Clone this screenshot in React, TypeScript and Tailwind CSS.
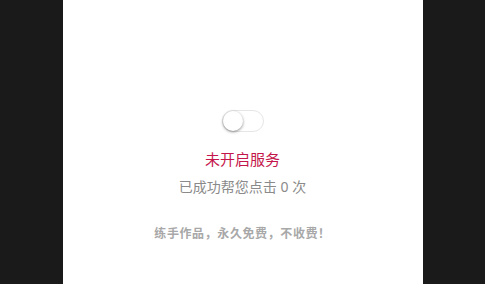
import React from "react";

export default function App() {
  const font = { fontFamily: '"Noto Sans", "Noto Sans CJK SC", sans-serif' };
  return (
    <div className="w-full h-[284px] bg-[#1a1a1a] flex justify-center" style={font}>
      <div className="w-[360px] h-full bg-white flex flex-col items-center pt-[110px]">
        <div className="relative w-[42px] h-[22px] rounded-full border border-[#e6e6e6] bg-white">
          <div className="absolute left-[0px] top-[0px] w-[20px] h-[20px] rounded-full bg-white shadow-[0_1px_3px_rgba(0,0,0,0.45)]" />
        </div>
        <div className="mt-[16px] text-[15px] leading-[22px] text-[#c4164b]">未开启服务</div>
        <div className="mt-[7px] text-[14px] leading-[20px] text-[#8a8a8a]">已成功帮您点击 0 次</div>
        <div className="mt-[28px] text-[12px] leading-[18px] font-bold text-[#a8a8a8] tracking-[0.6px]">练手作品，永久免费，不收费！</div>
      </div>
    </div>
  );
}
